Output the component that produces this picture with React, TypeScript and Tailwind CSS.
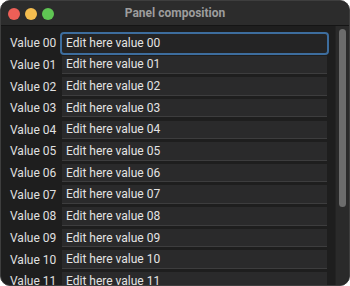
import React from "react";

const rows = Array.from({ length: 12 }, (_, i) => String(i).padStart(2, "0"));

export default function App() {
  return (
    <div className="w-[350px] h-[286px] bg-white overflow-hidden" style={{ fontFamily: "Roboto, 'Noto Sans', sans-serif" }}>
      <div className="w-[350px] h-[286px] rounded-[10px] bg-[#1e1e1e] border border-[#3e3e3e] overflow-hidden flex flex-col">
        <div className="h-[25px] shrink-0 bg-[#2c2c2c] border-b border-[#151515] flex items-center relative">
          <div className="flex gap-[5px] pl-[7px] pt-[2px]">
            <span className="w-[12px] h-[12px] rounded-full bg-[#ed5f57]" />
            <span className="w-[12px] h-[12px] rounded-full bg-[#f4bd4f]" />
            <span className="w-[12px] h-[12px] rounded-full bg-[#5fc553]" />
          </div>
          <div className="absolute inset-0 flex items-center justify-center text-[12px] font-bold text-[#9d9d9d]">
            Panel composition
          </div>
        </div>
        <div className="flex flex-1 min-h-0">
          <div className="flex-1 pt-[8px] pl-[9px] pr-[8px] flex flex-col">
            {rows.map((r, i) => (
              <div key={r} className="h-[21.65px] shrink-0 flex items-start">
                <div className="w-[52px] h-[18.5px] flex items-center text-[12px] text-[#e0e0e0]">Value {r}</div>
                <div
                  className={
                    i === 0
                      ? "flex-1 h-[18.5px] flex items-center pl-[4px] text-[12px] text-[#e4e4e4] bg-[#242425] rounded-[2px] outline outline-[2.5px] outline-[#3d6d9e]"
                      : "flex-1 h-[18.5px] flex items-center pl-[4px] text-[12px] text-[#e4e4e4] bg-[#2a2a2b] border-b border-[#3d3d3e]"
                  }
                >
                  Edit here value {r}
                </div>
              </div>
            ))}
          </div>
          <div className="w-[14px] shrink-0 bg-[#2a2a2a] border-l border-[#232323] pt-[3px] flex justify-center">
            <div className="w-[7px] h-[178px] rounded-full bg-[#6c6c6c]" />
          </div>
        </div>
      </div>
    </div>
  );
}
